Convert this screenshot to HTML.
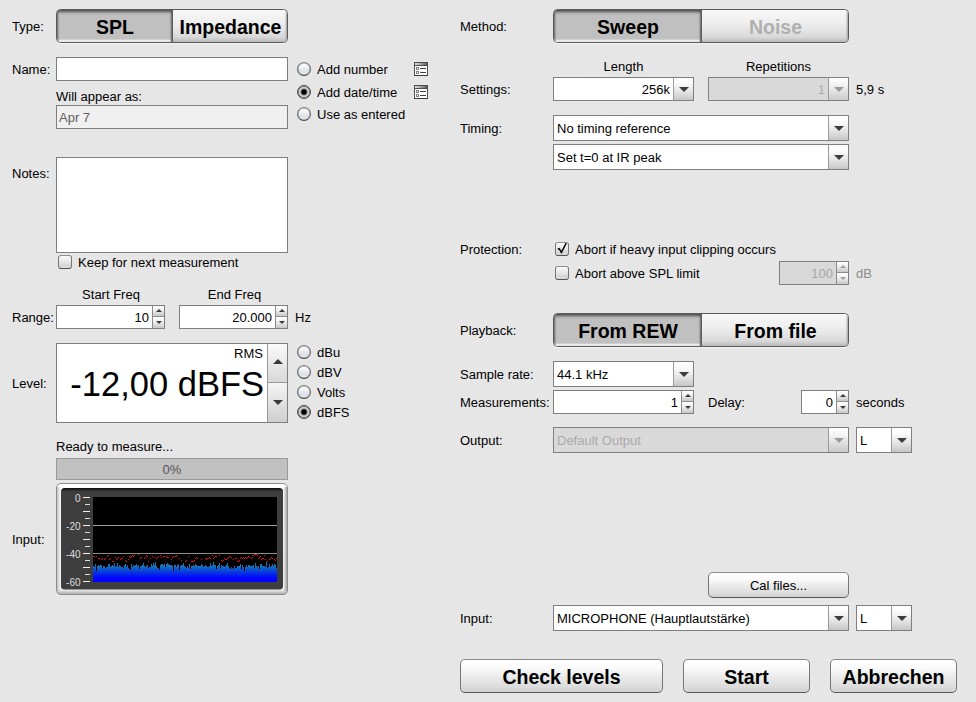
<!DOCTYPE html>
<html lang="de"><head><meta charset="utf-8"><title>Make a measurement</title>
<style>
html,body{margin:0;padding:0;}
body{width:976px;height:702px;background:#e6e6e6;position:relative;overflow:hidden;
 font-family:"Liberation Sans",Arial,sans-serif;font-size:13px;color:#000;}
.a{position:absolute;white-space:nowrap;}
.l{position:absolute;white-space:nowrap;height:16px;line-height:16px;transform:scaleY(1.04);transform-origin:50% 12px;}
.c{text-align:center;}
.r{text-align:right;}
.g{color:#8c8c8c;}
/* toggle group */
.tg{position:absolute;box-sizing:border-box;border:1px solid #5a5a5a;border-radius:4.5px;overflow:hidden;
 font-weight:bold;font-size:19.5px;display:flex;box-shadow:0 1px 0 #f4f4f4;}
.tg div{box-sizing:border-box;height:100%;text-align:center;line-height:34px;}
.tg .on{padding-left:1px;background:linear-gradient(#c0c0c0 0,#c0c0c0 calc(100% - 3px),#ececec calc(100% - 1.5px),#ffffff 100%);
 box-shadow:inset 0 3px 3px -1px #4c4c4c,inset 2px 0 2px -1px #6c6c6c,inset -2px 0 2px -1px #6c6c6c;}
.tg .off{background:linear-gradient(#ffffff 0,#f6f6f6 5%,#f0f0f0 35%,#e6e6e6 60%,#d8d8d8 85%,#b8b8b8 100%);padding-left:1px;box-shadow:inset -2px 0 2px -1px #9c9c9c;}
.tg .sep{border-left:1px solid #5a5a5a;}
.tg .dis{color:#b0b0b0;}
/* text inputs */
.in{position:absolute;box-sizing:border-box;border:1px solid #7f7f7f;background:#fff;}
.in.d{background:#f0f0f0;color:#606060;}
/* combos */
.cb{position:absolute;box-sizing:border-box;border:1px solid #7f7f7f;background:#fff;height:24px;}
.cb .t{position:absolute;left:3px;top:50%;margin-top:-7px;height:16px;line-height:16px;white-space:nowrap;transform:scaleY(1.04);transform-origin:50% 12px;}
.cb .t.rt{left:auto;right:23px;}
.cb .b{position:absolute;right:0;top:0;bottom:0;width:19px;border-left:1px solid #9a9a9a;
 background:linear-gradient(#ffffff 0,#fafafa 25%,#e6e6e6 60%,#c6c6c6 100%);}
.cb .b:after{content:"";position:absolute;left:50%;top:50%;margin-left:-5px;margin-top:-2.5px;border:5px solid transparent;border-top:5.5px solid #3c3c3c;border-bottom:0;}
.cb.d{background:#d9d9d9;color:#ababab;}
.cb.d .b{background:linear-gradient(#ffffff 0,#f4f4f4 30%,#cacaca 100%);}
.cb.d .b:after{border-top-color:#9a9a9a;}
/* spinners */
.sp{position:absolute;box-sizing:border-box;border:1px solid #7f7f7f;background:#fff;height:24px;}
.sp .t{position:absolute;right:15px;top:4px;height:16px;line-height:16px;transform:scaleY(1.04);transform-origin:50% 12px;}
.sp .u,.sp .dn{position:absolute;right:0;width:11px;border-left:1px solid #8c8c8c;background:linear-gradient(#ffffff,#f0f0f0 40%,#c8c8c8);}
.sp .u{top:0;height:10px;border-bottom:1px solid #8c8c8c;}
.sp .dn{top:11px;bottom:0;}
.sp .u:after{content:"";position:absolute;left:2.5px;top:3px;border:3px solid transparent;border-bottom:3.4px solid #3a3a3a;border-top:0;}
.sp .dn:after{content:"";position:absolute;left:2.5px;top:4px;border:3px solid transparent;border-top:3.4px solid #3a3a3a;border-bottom:0;}
.sp.d{background:#d9d9d9;color:#a6a6a6;}
.sp.d .u:after{border-bottom-color:#a0a0a0;}
.sp.d .dn:after{border-top-color:#a0a0a0;}
/* radio */
.rd{position:absolute;box-sizing:border-box;width:14px;height:14px;border-radius:50%;border:1px solid #6a6a6a;border-color:#868686 #6c6c6c #4a4a4a #6c6c6c;
 background:linear-gradient(#ffffff 0,#f2f3f6 30%,#dfe2e8 65%,#e4e6ea 100%);box-shadow:inset 0 0 0 0.5px #9a9a9a;}
.rd.on{border-color:#4a4a4a;background:radial-gradient(circle at 50% 50%,#000 0,#000 2px,#585858 2.9px,#c4c4c4 3.8px,#d8d8d8 6px);box-shadow:inset 0 0 0 0.6px #5a5a5a;}
/* checkbox */
.ck{position:absolute;box-sizing:border-box;width:14px;height:14px;border-radius:3px;border:1px solid #6e6e6e;border-color:#8e8e8e #747474 #505050 #747474;
 background:linear-gradient(#fafafa 0,#ececec 35%,#d6d6d6 80%,#dcdcdc 100%);}
/* buttons */
.bt{position:absolute;box-sizing:border-box;border:1px solid #707070;border-color:#8a8a8a #767676 #585858 #767676;border-radius:5px;text-align:center;
 background:linear-gradient(#ffffff 0,#fbfbfb 25%,#ececec 50%,#dedede 80%,#d0d0d0 100%);}
.bt.big{font-weight:bold;font-size:19.5px;line-height:34px;}
</style></head>
<body>
<div class="l " style="left:12px;top:19px;">Type:</div>
<div class="tg" style="left:56px;top:9px;width:232px;height:34px;"><div class="on" style="width:115px">SPL</div><div class="off sep" style="width:115px">Impedance</div></div>
<div class="l " style="left:12px;top:62px;">Name:</div>
<div class="in" style="left:56px;top:57px;width:232px;height:24px;"></div>
<div class="rd" style="left:297px;top:62px;"></div>
<div class="l " style="left:317px;top:62px;">Add number</div>
<svg class="a" style="left:414px;top:62px" width="14" height="14" viewBox="0 0 14 14"><rect x="0.5" y="0.5" width="13" height="13" fill="#fff" stroke="#4c4c4c"/><rect x="1" y="1" width="12" height="2" fill="url(#tb)"/><rect x="1" y="3" width="12" height="1" fill="#505050"/><rect x="0" y="13" width="14" height="1" fill="#3a3a3a"/><rect x="2.5" y="5.5" width="2" height="2" fill="#fff" stroke="#808080"/><rect x="2.5" y="9.5" width="2" height="2" fill="#fff" stroke="#808080"/><rect x="6" y="6" width="6" height="1" fill="#404040"/><rect x="6" y="10" width="6" height="1" fill="#404040"/></svg>
<div class="rd on" style="left:297px;top:85px;"></div>
<div class="l " style="left:317px;top:85px;">Add date/time</div>
<svg class="a" style="left:414px;top:85px" width="14" height="14" viewBox="0 0 14 14"><rect x="0.5" y="0.5" width="13" height="13" fill="#fff" stroke="#4c4c4c"/><rect x="1" y="1" width="12" height="2" fill="url(#tb)"/><rect x="1" y="3" width="12" height="1" fill="#505050"/><rect x="0" y="13" width="14" height="1" fill="#3a3a3a"/><rect x="2.5" y="5.5" width="2" height="2" fill="#fff" stroke="#808080"/><rect x="2.5" y="9.5" width="2" height="2" fill="#fff" stroke="#808080"/><rect x="6" y="6" width="6" height="1" fill="#404040"/><rect x="6" y="10" width="6" height="1" fill="#404040"/></svg>
<div class="rd" style="left:297px;top:107px;"></div>
<div class="l " style="left:317px;top:107px;">Use as entered</div>
<div class="l " style="left:56px;top:89px;">Will appear as:</div>
<div class="in d" style="left:56px;top:105px;width:232px;height:24px;"><div class="l" style="left:2px;top:4px;">Apr 7</div></div>
<div class="l " style="left:12px;top:166px;">Notes:</div>
<div class="in" style="left:56px;top:157px;width:232px;height:96px;"></div>
<div class="ck" style="left:58px;top:255px;"></div>
<div class="l " style="left:78px;top:255px;">Keep for next measurement</div>
<div class="l c" style="left:56px;top:287px;width:110px;">Start Freq</div>
<div class="l c" style="left:179px;top:287px;width:111px;">End Freq</div>
<div class="l " style="left:12px;top:310px;">Range:</div>
<div class="sp" style="left:56px;top:305px;width:109px;height:24px;"><div class="t">10</div><div class="u"></div><div class="dn"></div></div>
<div class="sp" style="left:179px;top:305px;width:109px;height:24px;"><div class="t">20.000</div><div class="u"></div><div class="dn"></div></div>
<div class="l " style="left:295px;top:310px;">Hz</div>
<div class="l " style="left:12px;top:376px;">Level:</div>
<div class="in" style="left:56px;top:343px;width:232px;height:80px;"><div class="l r" style="right:24px;top:2px;">RMS</div><div class="a" style="right:23px;top:20px;font-size:34.5px;line-height:40px;transform:scaleY(1.03);transform-origin:50% 31px;">-12,00 dBFS</div><div class="a" style="right:0;top:0;width:19px;height:38px;border-left:1px solid #9a9a9a;border-bottom:1px solid #9a9a9a;background:linear-gradient(#fafafa,#d8d8d8);"><div style="position:absolute;left:4.5px;top:15px;border:5px solid transparent;border-bottom:5.5px solid #3a3a3a;border-top:0"></div></div><div class="a" style="right:0;top:39px;width:19px;bottom:0;border-left:1px solid #9a9a9a;background:linear-gradient(#f4f4f4,#cfcfcf);"><div style="position:absolute;left:4.5px;top:17px;border:5px solid transparent;border-top:5.5px solid #3a3a3a;border-bottom:0"></div></div></div>
<div class="rd" style="left:297px;top:345px;"></div>
<div class="l " style="left:317px;top:345px;">dBu</div>
<div class="rd" style="left:297px;top:365px;"></div>
<div class="l " style="left:317px;top:365px;">dBV</div>
<div class="rd" style="left:297px;top:385px;"></div>
<div class="l " style="left:317px;top:385px;">Volts</div>
<div class="rd on" style="left:297px;top:405px;"></div>
<div class="l " style="left:317px;top:405px;">dBFS</div>
<div class="l " style="left:56px;top:439px;">Ready to measure...</div>
<div class="a c" style="left:56px;top:458px;width:232px;height:22px;box-sizing:border-box;border:1px solid #9a9a9a;background:#c0c0c0;color:#555;line-height:21px;">0%</div>
<div class="l " style="left:12px;top:532px;">Input:</div>
<svg class="a" style="left:0;top:0" width="976" height="702" viewBox="0 0 976 702"><defs><linearGradient id="bg" x1="0" y1="0" x2="0" y2="1"><stop offset="0" stop-color="#1c80a4"/><stop offset="0.3" stop-color="#1470b8"/><stop offset="0.55" stop-color="#0838e0"/><stop offset="0.8" stop-color="#0008fc"/><stop offset="1" stop-color="#0000ff"/></linearGradient><linearGradient id="tb" x1="0" y1="0" x2="1" y2="0"><stop offset="0" stop-color="#e4e4e4"/><stop offset="1" stop-color="#5c5c5c"/></linearGradient><linearGradient id="fr" x1="0" y1="0" x2="0" y2="1"><stop offset="0" stop-color="#ffffff"/><stop offset="0.95" stop-color="#fafafa"/><stop offset="1" stop-color="#a4a4a4"/></linearGradient><linearGradient id="frr" x1="0" y1="0" x2="1" y2="0"><stop offset="0" stop-color="#9a9a9a" stop-opacity="0"/><stop offset="1" stop-color="#9a9a9a" stop-opacity="0.9"/></linearGradient><linearGradient id="frl" x1="0" y1="0" x2="1" y2="0"><stop offset="0" stop-color="#bcbcbc" stop-opacity="0.9"/><stop offset="1" stop-color="#bcbcbc" stop-opacity="0"/></linearGradient><linearGradient id="pn" x1="0" y1="0" x2="0" y2="1"><stop offset="0" stop-color="#0c0c0c"/><stop offset="0.035" stop-color="#3e3e3e"/><stop offset="1" stop-color="#3e3e3e"/></linearGradient></defs><rect x="56.5" y="483.5" width="231" height="111" rx="4.5" fill="url(#fr)" stroke="#8c8c8c"/><rect x="283" y="487" width="4" height="104" fill="url(#frr)"/><rect x="57" y="487" width="4" height="104" fill="url(#frl)"/><rect x="61" y="488" width="222" height="101.5" rx="3.5" fill="url(#pn)"/><rect x="93" y="497" width="184" height="85" fill="#000"/><rect x="93" y="560" width="184" height="22" fill="url(#bg)"/><path d="M93,560 L93,566 L94,566 L94,567 L95,567 L95,564 L96,564 L96,571 L97,571 L97,566 L98,566 L98,565 L99,565 L99,566 L100,566 L100,565 L101,565 L101,565 L102,565 L102,568 L103,568 L103,566 L104,566 L104,566 L105,566 L105,568 L106,568 L106,567 L107,567 L107,567 L108,567 L108,564 L109,564 L109,564 L110,564 L110,567 L111,567 L111,566 L112,566 L112,565 L113,565 L113,566 L114,566 L114,563 L115,563 L115,567 L116,567 L116,566 L117,566 L117,563 L118,563 L118,567 L119,567 L119,565 L120,565 L120,566 L121,566 L121,567 L122,567 L122,567 L123,567 L123,568 L124,568 L124,565 L125,565 L125,564 L126,564 L126,567 L127,567 L127,565 L128,565 L128,568 L129,568 L129,569 L130,569 L130,570 L131,570 L131,564 L132,564 L132,567 L133,567 L133,565 L134,565 L134,566 L135,566 L135,565 L136,565 L136,564 L137,564 L137,566 L138,566 L138,565 L139,565 L139,569 L140,569 L140,566 L141,566 L141,566 L142,566 L142,565 L143,565 L143,563 L144,563 L144,566 L145,566 L145,567 L146,567 L146,566 L147,566 L147,565 L148,565 L148,568 L149,568 L149,567 L150,567 L150,567 L151,567 L151,564 L152,564 L152,566 L153,566 L153,563 L154,563 L154,565 L155,565 L155,562 L156,562 L156,566 L157,566 L157,568 L158,568 L158,568 L159,568 L159,570 L160,570 L160,565 L161,565 L161,564 L162,564 L162,564 L163,564 L163,565 L164,565 L164,564 L165,564 L165,567 L166,567 L166,564 L167,564 L167,563 L168,563 L168,564 L169,564 L169,565 L170,565 L170,565 L171,565 L171,565 L172,565 L172,566 L173,566 L173,571 L174,571 L174,565 L175,565 L175,565 L176,565 L176,567 L177,567 L177,565 L178,565 L178,564 L179,564 L179,570 L180,570 L180,566 L181,566 L181,565 L182,565 L182,565 L183,565 L183,563 L184,563 L184,566 L185,566 L185,567 L186,567 L186,568 L187,568 L187,566 L188,566 L188,568 L189,568 L189,564 L190,564 L190,569 L191,569 L191,566 L192,566 L192,566 L193,566 L193,565 L194,565 L194,566 L195,566 L195,564 L196,564 L196,565 L197,565 L197,566 L198,566 L198,566 L199,566 L199,566 L200,566 L200,566 L201,566 L201,564 L202,564 L202,565 L203,565 L203,567 L204,567 L204,566 L205,566 L205,565 L206,565 L206,566 L207,566 L207,567 L208,567 L208,567 L209,567 L209,566 L210,566 L210,563 L211,563 L211,566 L212,566 L212,565 L213,565 L213,562 L214,562 L214,565 L215,565 L215,565 L216,565 L216,569 L217,569 L217,566 L218,566 L218,565 L219,565 L219,563 L220,563 L220,568 L221,568 L221,565 L222,565 L222,566 L223,566 L223,566 L224,566 L224,567 L225,567 L225,566 L226,566 L226,565 L227,565 L227,563 L228,563 L228,566 L229,566 L229,568 L230,568 L230,569 L231,569 L231,567 L232,567 L232,568 L233,568 L233,569 L234,569 L234,566 L235,566 L235,568 L236,568 L236,568 L237,568 L237,566 L238,566 L238,566 L239,566 L239,566 L240,566 L240,564 L241,564 L241,569 L242,569 L242,565 L243,565 L243,567 L244,567 L244,571 L245,571 L245,567 L246,567 L246,565 L247,565 L247,567 L248,567 L248,565 L249,565 L249,565 L250,565 L250,566 L251,566 L251,566 L252,566 L252,566 L253,566 L253,565 L254,565 L254,568 L255,568 L255,563 L256,563 L256,566 L257,566 L257,567 L258,567 L258,566 L259,566 L259,569 L260,569 L260,564 L261,564 L261,564 L262,564 L262,566 L263,566 L263,566 L264,566 L264,566 L265,566 L265,567 L266,567 L266,562 L267,562 L267,568 L268,568 L268,567 L269,567 L269,564 L270,564 L270,567 L271,567 L271,566 L272,566 L272,564 L273,564 L273,566 L274,566 L274,564 L275,564 L275,565 L276,565 L276,568 L277,568 L277,560 Z" fill="#000"/><rect x="93" y="525" width="184" height="1" fill="#a0a0a0"/><rect x="93" y="553" width="184" height="1" fill="#8c8c8c"/><path d="M93,556h1v1h-1zM94,556h1v1h-1zM96,556h1v1h-1zM98,558h1v1h-1zM99,558h1v1h-1zM101,559h1v1h-1zM102,558h1v1h-1zM104,559h1v1h-1zM105,558h1v1h-1zM107,556h1v1h-1zM108,555h1v1h-1zM109,559h1v1h-1zM110,558h1v1h-1zM112,561h1v1h-1zM113,561h1v1h-1zM115,557h1v1h-1zM116,559h1v1h-1zM117,558h1v1h-1zM118,557h1v1h-1zM120,559h1v1h-1zM121,558h1v1h-1zM122,558h1v1h-1zM123,556h1v1h-1zM125,560h1v1h-1zM126,561h1v1h-1zM128,559h1v1h-1zM129,556h1v1h-1zM130,557h1v1h-1zM131,556h1v1h-1zM132,555h1v1h-1zM133,556h1v1h-1zM134,555h1v1h-1zM138,554h1v1h-1zM140,558h1v1h-1zM141,557h1v1h-1zM144,558h1v1h-1zM145,557h1v1h-1zM146,555h1v1h-1zM147,556h1v1h-1zM148,561h1v1h-1zM150,558h1v1h-1zM152,556h1v1h-1zM154,557h1v1h-1zM156,558h1v1h-1zM157,557h1v1h-1zM158,556h1v1h-1zM160,555h1v1h-1zM161,557h1v1h-1zM163,556h1v1h-1zM164,556h1v1h-1zM166,556h1v1h-1zM167,557h1v1h-1zM168,557h1v1h-1zM171,559h1v1h-1zM172,557h1v1h-1zM173,556h1v1h-1zM175,556h1v1h-1zM176,555h1v1h-1zM177,556h1v1h-1zM179,558h1v1h-1zM181,560h1v1h-1zM185,561h1v1h-1zM186,560h1v1h-1zM188,556h1v1h-1zM191,561h1v1h-1zM192,561h1v1h-1zM193,561h1v1h-1zM194,560h1v1h-1zM195,558h1v1h-1zM196,557h1v1h-1zM197,558h1v1h-1zM201,559h1v1h-1zM205,558h1v1h-1zM206,559h1v1h-1zM207,558h1v1h-1zM208,558h1v1h-1zM209,557h1v1h-1zM210,558h1v1h-1zM212,555h1v1h-1zM213,558h1v1h-1zM214,557h1v1h-1zM215,556h1v1h-1zM216,556h1v1h-1zM219,555h1v1h-1zM221,560h1v1h-1zM222,561h1v1h-1zM223,560h1v1h-1zM224,558h1v1h-1zM225,559h1v1h-1zM226,559h1v1h-1zM227,558h1v1h-1zM228,557h1v1h-1zM229,556h1v1h-1zM231,557h1v1h-1zM233,559h1v1h-1zM235,558h1v1h-1zM236,558h1v1h-1zM237,561h1v1h-1zM238,561h1v1h-1zM239,560h1v1h-1zM240,558h1v1h-1zM241,557h1v1h-1zM242,558h1v1h-1zM244,558h1v1h-1zM245,557h1v1h-1zM246,558h1v1h-1zM247,557h1v1h-1zM248,556h1v1h-1zM249,557h1v1h-1zM251,558h1v1h-1zM252,557h1v1h-1zM253,555h1v1h-1zM254,554h1v1h-1zM255,554h1v1h-1zM256,554h1v1h-1zM257,555h1v1h-1zM258,558h1v1h-1zM259,557h1v1h-1zM260,556h1v1h-1zM261,559h1v1h-1zM262,558h1v1h-1zM263,558h1v1h-1zM264,555h1v1h-1zM265,559h1v1h-1zM267,561h1v1h-1zM269,559h1v1h-1zM270,558h1v1h-1zM271,557h1v1h-1zM272,558h1v1h-1zM274,559h1v1h-1zM275,560h1v1h-1zM276,558h1v1h-1z" fill="#f01010"/><rect x="83" y="497" width="7" height="1" fill="#f2f2f2"/><rect x="85" y="504" width="5" height="1" fill="#dcdcdc"/><rect x="83" y="511" width="7" height="1" fill="#f2f2f2"/><rect x="85" y="518" width="5" height="1" fill="#dcdcdc"/><rect x="83" y="525" width="7" height="1" fill="#f2f2f2"/><rect x="85" y="532" width="5" height="1" fill="#dcdcdc"/><rect x="83" y="539" width="7" height="1" fill="#f2f2f2"/><rect x="85" y="546" width="5" height="1" fill="#dcdcdc"/><rect x="83" y="553" width="7" height="1" fill="#f2f2f2"/><rect x="85" y="560" width="5" height="1" fill="#dcdcdc"/><rect x="83" y="567" width="7" height="1" fill="#f2f2f2"/><rect x="85" y="574" width="5" height="1" fill="#dcdcdc"/><rect x="83" y="581" width="7" height="1" fill="#f2f2f2"/><text x="80.5" y="502.2" text-anchor="end" font-family="Liberation Sans, sans-serif" font-size="10" fill="#dedede">0</text><text x="80.5" y="530.2" text-anchor="end" font-family="Liberation Sans, sans-serif" font-size="10" fill="#dedede">-20</text><text x="80.5" y="558.2" text-anchor="end" font-family="Liberation Sans, sans-serif" font-size="10" fill="#dedede">-40</text><text x="80.5" y="586.2" text-anchor="end" font-family="Liberation Sans, sans-serif" font-size="10" fill="#dedede">-60</text></svg>
<div class="l " style="left:460px;top:19px;">Method:</div>
<div class="tg" style="left:553px;top:9px;width:296px;height:34px;"><div class="on" style="width:147px">Sweep</div><div class="off sep dis" style="width:147px">Noise</div></div>
<div class="l c" style="left:553px;top:59px;width:141px;">Length</div>
<div class="l c" style="left:708px;top:59px;width:141px;">Repetitions</div>
<div class="l " style="left:460px;top:82px;">Settings:</div>
<div class="cb" style="left:553px;top:77px;width:141px;height:24px;"><div class="t rt">256k</div><div class="b"></div></div>
<div class="cb d" style="left:708px;top:77px;width:141px;height:24px;"><div class="t rt">1</div><div class="b"></div></div>
<div class="l " style="left:856px;top:82px;">5,9 s</div>
<div class="l " style="left:460px;top:121px;">Timing:</div>
<div class="cb" style="left:553px;top:115px;width:296px;height:26px;"><div class="t">No timing reference</div><div class="b"></div></div>
<div class="cb" style="left:553px;top:144px;width:296px;height:26px;"><div class="t">Set t=0 at IR peak</div><div class="b"></div></div>
<div class="l " style="left:460px;top:242px;">Protection:</div>
<div class="ck" style="left:555px;top:242px;"><svg width="14" height="14" viewBox="0 0 14 14" style="position:absolute;left:-1px;top:-1px"><path d="M2.8,7.2 L4.2,6.6 L6.4,10.4 L11.2,1.2" fill="none" stroke="#0a0a0a" stroke-width="1.5" stroke-linejoin="miter"/></svg></div>
<div class="l " style="left:575px;top:242px;">Abort if heavy input clipping occurs</div>
<div class="ck" style="left:555px;top:266px;"></div>
<div class="l " style="left:575px;top:266px;">Abort above SPL limit</div>
<div class="sp d" style="left:779px;top:261px;width:70px;height:24px;"><div class="t">100</div><div class="u"></div><div class="dn"></div></div>
<div class="l g" style="left:856px;top:266px;">dB</div>
<div class="l " style="left:460px;top:323px;">Playback:</div>
<div class="tg" style="left:553px;top:313px;width:296px;height:34px;"><div class="on" style="width:147px">From REW</div><div class="off sep" style="width:147px">From file</div></div>
<div class="l " style="left:460px;top:367px;">Sample rate:</div>
<div class="cb" style="left:553px;top:361px;width:141px;height:26px;"><div class="t">44.1 kHz</div><div class="b"></div></div>
<div class="l " style="left:460px;top:395px;">Measurements:</div>
<div class="sp" style="left:553px;top:390px;width:141px;height:24px;"><div class="t">1</div><div class="u"></div><div class="dn"></div></div>
<div class="l " style="left:708px;top:395px;">Delay:</div>
<div class="sp" style="left:801px;top:390px;width:48px;height:24px;"><div class="t">0</div><div class="u"></div><div class="dn"></div></div>
<div class="l " style="left:856px;top:395px;">seconds</div>
<div class="l " style="left:460px;top:433px;">Output:</div>
<div class="cb d" style="left:553px;top:427px;width:296px;height:26px;"><div class="t">Default Output</div><div class="b"></div></div>
<div class="cb" style="left:856px;top:427px;width:56px;height:26px;"><div class="t">L</div><div class="b"></div></div>
<div class="bt" style="left:708px;top:572px;width:141px;height:26px;line-height:25px;">Cal files...</div>
<div class="l " style="left:460px;top:611px;">Input:</div>
<div class="cb" style="left:553px;top:605px;width:296px;height:26px;"><div class="t">MICROPHONE (Hauptlautstärke)</div><div class="b"></div></div>
<div class="cb" style="left:856px;top:605px;width:56px;height:26px;"><div class="t">L</div><div class="b"></div></div>
<div class="bt big" style="left:460px;top:659px;width:203px;height:34px;">Check levels</div>
<div class="bt big" style="left:683px;top:659px;width:127px;height:34px;">Start</div>
<div class="bt big" style="left:830px;top:659px;width:127px;height:34px;">Abbrechen</div>
</body></html>
